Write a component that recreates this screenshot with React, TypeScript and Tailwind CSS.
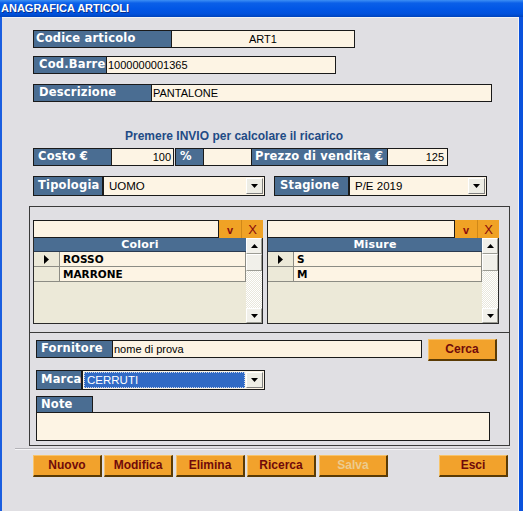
import React from "react";

const LBL =
  "bg-[#4a6d92] border border-[#1a1a1a] text-white font-bold text-[11.5px] leading-[14px] tracking-[0.2px] [font-family:'DejaVu_Sans',sans-serif] whitespace-nowrap overflow-hidden";
const INP =
  "bg-[#fdf4e4] border border-[#1a1a1a] text-black text-[11px] leading-[16px] [font-family:'Liberation_Sans',Arial,sans-serif] whitespace-nowrap overflow-hidden";
const BTN =
  "h-[22px] w-[69px] bg-[#f2a22c] border-t border-l border-t-[#f8c46a] border-l-[#f8c46a] border-r-2 border-b-2 border-r-[#5a3b05] border-b-[#5a3b05] text-[12px] font-bold leading-[18px] text-center [font-family:'Liberation_Sans',Arial,sans-serif]";

function Tri({ dir = "down" }: { dir?: "down" | "up" | "right" }) {
  if (dir === "right")
    return (
      <svg width="5" height="9" viewBox="0 0 5 9">
        <path d="M0 0 L5 4.5 L0 9 Z" fill="#000" />
      </svg>
    );
  return (
    <svg width="7" height="4" viewBox="0 0 7 4">
      <path d={dir === "down" ? "M0 0 H7 L3.5 4 Z" : "M0 4 H7 L3.5 0 Z"} fill="#000" />
    </svg>
  );
}

function ArrowBtn() {
  return (
    <div className="w-[17px] h-full bg-[#eeede5] border border-t-white border-l-white border-r-[#7f7f7f] border-b-[#7f7f7f] flex items-center justify-center shrink-0">
      <Tri />
    </div>
  );
}

function Select({
  w,
  value,
  selected = false,
}: {
  w: number;
  value: string;
  selected?: boolean;
}) {
  return (
    <div
      className="h-full bg-[#fdf4e4] border border-[#1a1a1a] flex p-[1px] gap-[1px]"
      style={{ width: w }}
    >
      {selected ? (
        <div className="flex-1 bg-[#316ac5] border border-dotted border-[#c9d6ee] text-white text-[11.5px] leading-[15px] pl-[2px] [font-family:'Liberation_Sans',Arial,sans-serif]">
          {value}
        </div>
      ) : (
        <div className="flex-1 text-black text-[11.5px] leading-[17px] pl-[4px] [font-family:'Liberation_Sans',Arial,sans-serif]">
          {value}
        </div>
      )}
      <ArrowBtn />
    </div>
  );
}

function Grid({
  w,
  title,
  rows,
}: {
  w: number;
  title: string;
  rows: string[];
}) {
  return (
    <div className="flex flex-col" style={{ width: w }}>
      <div className="flex h-[18px]">
        <div className={INP + " flex-1"} />
        <div className="w-[22px] h-full bg-[#f0a225] flex items-center justify-center text-[#8a0b0b] font-bold text-[11px] [font-family:'Liberation_Sans',Arial,sans-serif] leading-none pt-[2px]">
          v
        </div>
        <div className="w-[22px] h-full bg-[#f0a225] border-l border-l-[#d08818] flex items-center justify-center text-[#8a0b0b] text-[13px] [font-family:'Liberation_Sans',Arial,sans-serif] leading-none">
          X
        </div>
      </div>
      <div className="flex h-[86px] border border-[#2a2a2a] border-t-0">
        <div className="flex-1 flex flex-col bg-[#ece9d8]">
          <div className="h-[14px] bg-[#4a6d92] border-b border-[#2a3a50] text-white font-bold text-[11px] leading-[13px] text-center [font-family:'DejaVu_Sans',sans-serif] tracking-[0.2px]">
            {title}
          </div>
          {rows.map((r, i) => (
            <div key={r} className="flex h-[15px] border-b border-[#8c8c84]">
              <div className="w-[26px] bg-[#ece9d8] border-r border-[#8c8c84] flex items-center justify-center">
                {i === 0 ? <Tri dir="right" /> : null}
              </div>
              <div className="flex-1 bg-[#fdf4e4] border-r border-[#8c8c84] pl-[3px] text-black font-bold text-[10.5px] leading-[14px] [font-family:'DejaVu_Sans',sans-serif]">
                {r}
              </div>
            </div>
          ))}
        </div>
        <div className="w-[16px] flex flex-col bg-[repeating-conic-gradient(#e9e7dc_0%_25%,#ffffff_0%_50%)] bg-[length:2px_2px]">
          <div className="h-[16px] bg-[#f1f0ea] border border-t-white border-l-white border-r-[#9c9c94] border-b-[#9c9c94] flex items-center justify-center">
            <Tri dir="up" />
          </div>
          <div className="h-[17px] bg-[#f1f0ea] border border-t-white border-l-white border-r-[#9c9c94] border-b-[#9c9c94]" />
          <div className="flex-1" />
          <div className="h-[15px] bg-[#f1f0ea] border border-t-white border-l-white border-r-[#9c9c94] border-b-[#9c9c94] flex items-center justify-center">
            <Tri dir="down" />
          </div>
        </div>
      </div>
    </div>
  );
}

export default function App() {
  return (
    <div className="w-[523px] h-[511px] flex flex-col bg-[#0b52dc] overflow-hidden">
      <div className="h-[17px] shrink-0 bg-[linear-gradient(to_bottom,#3d8ff5_0%,#0b60e8_18%,#0257e6_50%,#0151dc_82%,#0043bb_100%)] text-white font-bold text-[11px] leading-[17px] pl-[1px] [font-family:'Liberation_Sans',Arial,sans-serif] [text-shadow:1px_1px_0_#0a2f8a]">
        ANAGRAFICA ARTICOLI
      </div>
      <div className="flex-1 flex">
        <div className="w-[2px] bg-[#1b5ee0]" />
        <div className="flex-1 bg-[#e0dfe3] border-t border-t-[#f2f2f4] border-r border-r-[#f4f4f6] flex flex-col">
          {/* Row 1 */}
          <div className="flex h-[18px] mt-[12px] ml-[31px]">
            <div className={LBL + " w-[139px] pl-[2px]"}>Codice articolo</div>
            <div className={INP + " w-[183px] border-l-0 text-center"}>ART1</div>
          </div>
          {/* Row 2 */}
          <div className="flex h-[18px] mt-[8px] ml-[31px]">
            <div className={LBL + " w-[74px] pl-[5px]"}>Cod.Barre</div>
            <div className={INP + " w-[229px] border-l-0 pl-[1px]"}>1000000001365</div>
          </div>
          {/* Row 3 */}
          <div className="flex h-[18px] mt-[10px] ml-[31px]">
            <div className={LBL + " w-[119px] pl-[5px]"}>Descrizione</div>
            <div className={INP + " w-[340px] border-l-0 pl-[1px]"}>PANTALONE</div>
          </div>
          {/* Hint */}
          <div className="mt-[27px] ml-[123px] h-[14px] text-[#1f4b86] font-bold text-[12px] leading-[14px] [font-family:'Liberation_Sans',Arial,sans-serif] whitespace-nowrap">
            Premere INVIO per calcolare il ricarico
          </div>
          {/* Costo row */}
          <div className="flex h-[18px] mt-[5px] ml-[31px]">
            <div className={LBL + " w-[79px] pl-[4px]"}>Costo €</div>
            <div className={INP + " w-[62px] border-l-0 text-right pr-[2px]"}>100</div>
            <div className={LBL + " w-[29px] ml-[1px] pl-[4px]"}>%</div>
            <div className={INP + " w-[48px] border-l-0"} />
            <div className={LBL + " w-[136px] border-l-0 pl-[3px]"}>Prezzo di vendita €</div>
            <div className={INP + " w-[60px] border-l-0 text-right pr-[3px]"}>125</div>
          </div>
          {/* Tipologia row */}
          <div className="flex h-[20px] mt-[10px] ml-[31px]">
            <div className={LBL + " w-[70px] pl-[4px] pt-[1px]"}>Tipologia</div>
            <Select w={162} value="UOMO" />
            <div className={LBL + " w-[75px] ml-[9px] pl-[5px] pt-[1px]"}>Stagione</div>
            <Select w={138} value="P/E 2019" />
          </div>
          {/* Frame 1: grids */}
          <div className="mt-[10px] ml-[27px] w-[481px] h-[127px] border border-[#3a3a3a] pt-[13px] pl-[3px] flex gap-[4px]">
            <Grid w={230} title="Colori" rows={["ROSSO", "MARRONE"]} />
            <Grid w={232} title="Misure" rows={["S", "M"]} />
          </div>
          {/* Frame 2 */}
          <div className="ml-[27px] w-[481px] h-[113px] border border-t-0 border-[#3a3a3a] pt-[7px] pl-[6px] flex flex-col">
            <div className="flex h-[18px] items-start">
              <div className={LBL + " w-[77px] h-[18px] pl-[4px]"}>Fornitore</div>
              <div className={INP + " w-[309px] h-[18px] border-l-0 pl-[1px]"}>nome di prova</div>
              <div className={BTN + " w-[67px] ml-[6px] -mt-[1px] text-[#700a0a] shrink-0"}>Cerca</div>
            </div>
            <div className="flex h-[20px] mt-[12px]">
              <div className={LBL + " w-[46px] pl-[4px] pt-[1px]"}>Marca</div>
              <Select w={183} value="CERRUTI" selected />
            </div>
            <div className={LBL + " w-[57px] h-[16px] mt-[6px] pl-[4px] border-b-0"}>Note</div>
            <div className={INP + " w-[454px] h-[29px]"} />
          </div>
          {/* Separator */}
          <div className="mt-[2px] ml-[13px] w-[495px] h-[2px] border-t border-t-[#b4b3b8] border-b border-b-[#f6f6f8]" />
          {/* Buttons */}
          <div className="flex mt-[5px] ml-[31px]">
            <div className={BTN + " text-[#700a0a]"}>Nuovo</div>
            <div className={BTN + " ml-[2px] text-[#700a0a]"}>Modifica</div>
            <div className={BTN + " ml-[3px] text-[#700a0a]"}>Elimina</div>
            <div className={BTN + " ml-[2px] text-[#700a0a]"}>Ricerca</div>
            <div className={BTN + " ml-[3px] text-[#eccb8e]"}>Salva</div>
            <div className={BTN + " ml-[51px] text-[#700a0a]"}>Esci</div>
          </div>
        </div>
        <div className="w-[4px] bg-[#0b52dc]" />
      </div>
    </div>
  );
}
